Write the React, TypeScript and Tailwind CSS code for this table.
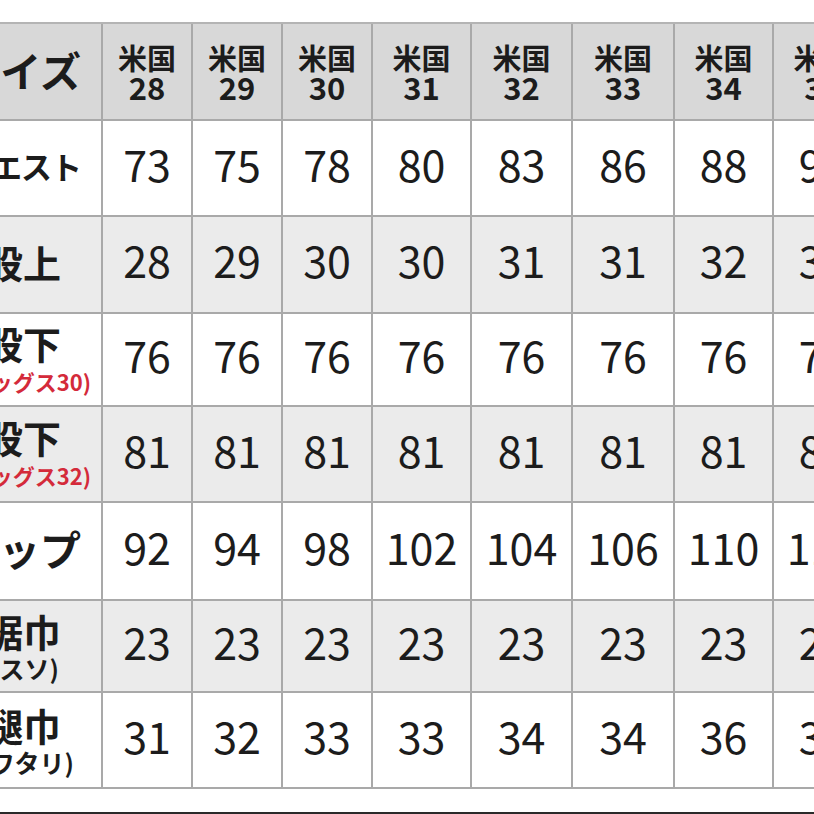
import React from "react";

const cols = ["28", "29", "30", "31", "32", "33", "34", "35"];

type Row = {
  h: string;
  bg: string;
  label: React.ReactNode;
  values: string[];
};

const F = { fontFamily: '"Noto Sans CJK JP", "Noto Sans", sans-serif' };

const rows: Row[] = [
  {
    h: "h-[96px]",
    bg: "bg-white",
    label: <span className="mr-[20px] mb-[6px] text-[31px] font-bold leading-none tracking-[-1px]">ウエスト</span>,
    values: ["73", "75", "78", "80", "83", "86", "88", "91"],
  },
  {
    h: "h-[97px]",
    bg: "bg-[#ebebeb]",
    label: <span className="mr-[40px] mb-[6px] text-[38px] font-bold leading-none">股上</span>,
    values: ["28", "29", "30", "30", "31", "31", "32", "33"],
  },
  {
    h: "h-[93px]",
    bg: "bg-white",
    label: (
      <>
        <span className="mr-[40px] text-[38px] font-bold leading-none">股下</span>
        <span className="mr-[10px] mt-[8px] mb-[4px] text-[22px] font-bold leading-none text-[#d42a3a]">(インレッグス30)</span>
      </>
    ),
    values: ["76", "76", "76", "76", "76", "76", "76", "76"],
  },
  {
    h: "h-[96px]",
    bg: "bg-[#ebebeb]",
    label: (
      <>
        <span className="mr-[40px] text-[38px] font-bold leading-none">股下</span>
        <span className="mr-[10px] mt-[8px] mb-[4px] text-[22px] font-bold leading-none text-[#d42a3a]">(インレッグス32)</span>
      </>
    ),
    values: ["81", "81", "81", "81", "81", "81", "81", "81"],
  },
  {
    h: "h-[98px]",
    bg: "bg-white",
    label: <span className="mr-[20px] mb-[6px] text-[41px] font-bold leading-none">ヒップ</span>,
    values: ["92", "94", "98", "102", "104", "106", "110", "114"],
  },
  {
    h: "h-[92px]",
    bg: "bg-[#ebebeb]",
    label: (
      <>
        <span className="mr-[40px] text-[38px] font-bold leading-none">裾巾</span>
        <span className="mr-[42px] mt-[6px] text-[25px] font-bold leading-none">(スソ)</span>
      </>
    ),
    values: ["23", "23", "23", "23", "23", "23", "23", "24"],
  },
  {
    h: "h-[96px]",
    bg: "bg-white",
    label: (
      <>
        <span className="mr-[40px] text-[38px] font-bold leading-none">腿巾</span>
        <span className="mr-[27px] mt-[6px] text-[25px] font-bold leading-none">(ワタリ)</span>
      </>
    ),
    values: ["31", "32", "33", "33", "34", "34", "36", "37"],
  },
];

const widths = ["w-[90px]", "w-[90px]", "w-[90px]", "w-[99px]", "w-[101px]", "w-[102px]", "w-[99px]", "w-[99px]"];

export default function App() {
  return (
    <div className="w-[814px] h-[814px] overflow-hidden bg-white flex flex-col text-[#1c1c1c]" style={F}>
      <div className="h-[22px] shrink-0" />
      <div className="flex flex-col border-t-2 border-[#b4b4b4] w-[900px]">
        {/* header */}
        <div className="flex h-[97px] bg-[#d8d8d8]">
          <div className="w-[103px] shrink-0 overflow-hidden flex flex-col items-end justify-center border-r-2 border-b-2 border-[#a9a9a9]">
            <span className="mr-[20px] mb-[4px] whitespace-nowrap text-[41px] font-bold leading-none">サイズ</span>
          </div>
          {cols.map((c, i) => (
            <div
              key={c}
              className={`${widths[i]} shrink-0 flex flex-col items-center justify-center border-r-2 border-b-2 border-[#a9a9a9] font-bold`}
            >
              <span className="text-[29px] leading-[30px]">米国</span>
              <span className="text-[31px] leading-[30px]">{c}</span>
            </div>
          ))}
        </div>
        {rows.map((r, ri) => (
          <div key={ri} className={`flex ${r.h} ${r.bg}`}>
            <div className="w-[103px] shrink-0 overflow-hidden flex flex-col items-end justify-center border-r-2 border-b-2 border-[#a9a9a9] whitespace-nowrap">
              {r.label}
            </div>
            {r.values.map((v, i) => (
              <div
                key={i}
                className={`${widths[i]} shrink-0 flex items-center justify-center pb-[10px] border-r-2 border-b-2 border-[#a9a9a9] text-[43px] leading-none`}
              >
                {v}
              </div>
            ))}
          </div>
        ))}
      </div>
      <div className="flex-1" />
      <div className="h-[2px] bg-[#2a2a2a] shrink-0" />
    </div>
  );
}
